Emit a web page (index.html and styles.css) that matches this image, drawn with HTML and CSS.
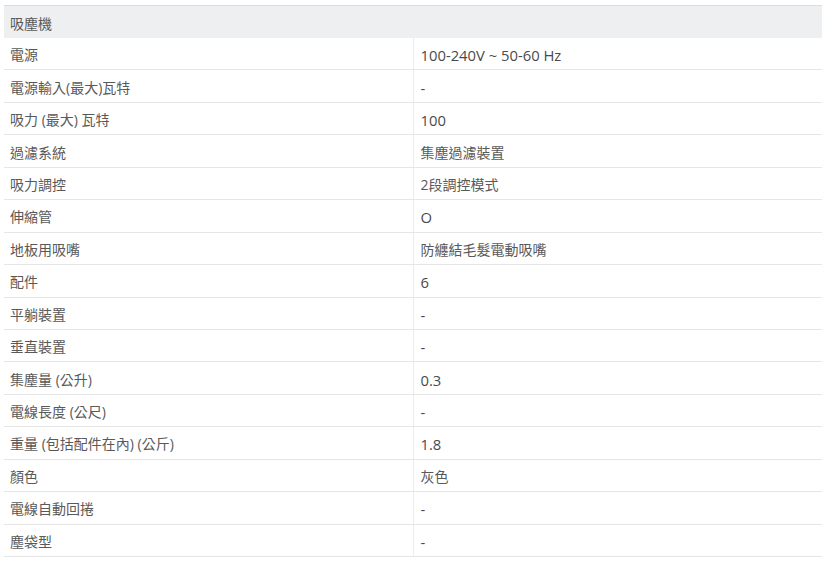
FILE: index.html
```html
<!DOCTYPE html>
<html lang="zh-Hant">
<head>
<meta charset="utf-8">
<title>吸塵機</title>
<link rel="stylesheet" href="styles.css">
</head>
<body>
<table class="spec">
  <thead>
    <tr><th colspan="2" class="spec-head">吸塵機</th></tr>
  </thead>
  <tbody>
    <tr><td class="k">電源</td><td class="v latin">100-240V ~ 50-60 Hz</td></tr>
    <tr><td class="k">電源輸入(最大)瓦特</td><td class="v latin">-</td></tr>
    <tr><td class="k">吸力 (最大) 瓦特</td><td class="v latin">100</td></tr>
    <tr><td class="k">過濾系統</td><td class="v">集塵過濾裝置</td></tr>
    <tr><td class="k">吸力調控</td><td class="v">2段調控模式</td></tr>
    <tr><td class="k">伸縮管</td><td class="v latin">O</td></tr>
    <tr><td class="k">地板用吸嘴</td><td class="v">防纏結毛髮電動吸嘴</td></tr>
    <tr><td class="k">配件</td><td class="v latin">6</td></tr>
    <tr><td class="k">平躺裝置</td><td class="v latin">-</td></tr>
    <tr><td class="k">垂直裝置</td><td class="v latin">-</td></tr>
    <tr><td class="k">集塵量 (公升)</td><td class="v latin">0.3</td></tr>
    <tr><td class="k">電線長度 (公尺)</td><td class="v latin">-</td></tr>
    <tr><td class="k">重量 (包括配件在內) (公斤)</td><td class="v latin">1.8</td></tr>
    <tr><td class="k">顏色</td><td class="v">灰色</td></tr>
    <tr><td class="k">電線自動回捲</td><td class="v latin">-</td></tr>
    <tr><td class="k">塵袋型</td><td class="v latin">-</td></tr>
  </tbody>
</table>
</body>
</html>
```
FILE: styles.css
```css
html, body {
  margin: 0;
  padding: 0;
  background: #ffffff;
}

body {
  padding: 5px 5px 0 4px;
  font-family: "Open Sans", "Noto Sans CJK TC", sans-serif;
  font-size: 14px;
  color: #4a4a4a;
}

.spec {
  width: 818px;
  border-collapse: collapse;
  border-top: 1px solid #dcdcdc;
  table-layout: fixed;
}

.spec-head {
  background: #eeeff0;
  text-align: left;
  font-weight: normal;
  height: 32px;
  padding: 2px 6px 0;
  box-sizing: border-box;
  color: #595959;
}

.spec td {
  height: 32.45px;
  box-sizing: border-box;
  border-bottom: 1px solid #e6e6e6;
  vertical-align: middle;
  padding: 3px 6px 0;
  line-height: 20px;
}

.spec td.k {
  width: 409px;
  border-right: 1px solid #ececec;
  color: #595959;
}

.spec td.v {
  padding-left: 7px;
  color: #595959;
}

.spec td.latin {
  font-size: 14.8px;
  color: #4a4a4a;
}
```
